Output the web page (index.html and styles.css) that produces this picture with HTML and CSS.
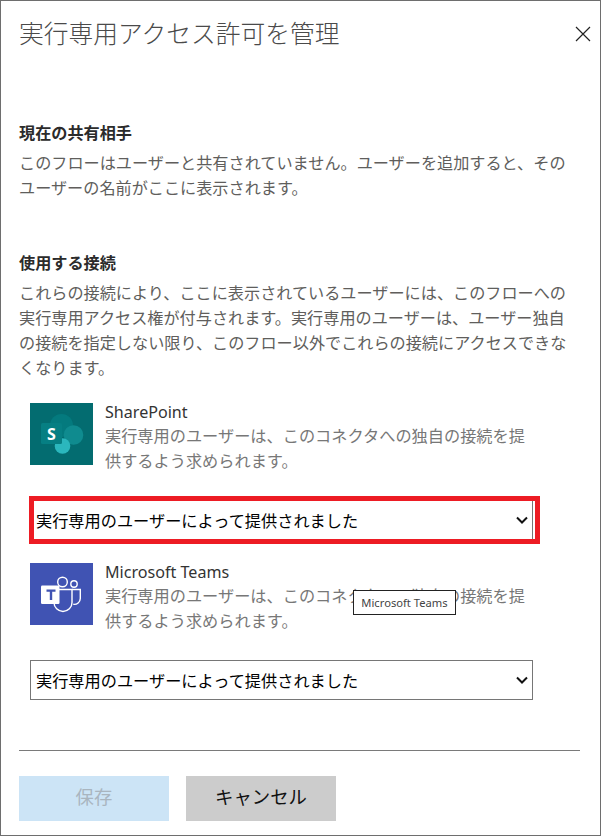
FILE: index.html
```html
<!DOCTYPE html>
<html lang="ja">
<head>
<meta charset="utf-8">
<title>実行専用アクセス許可を管理</title>
<link rel="stylesheet" href="styles.css">
</head>
<body>
<div class="dialog">
  <header class="header">
    <h1 class="title">実行専用アクセス許可を管理</h1>
    <svg class="close" width="16" height="16" viewBox="0 0 16 16"><path d="M1 1l14 14M15 1L1 15" stroke="#222" stroke-width="1.2" fill="none"/></svg>
  </header>
  <section class="section shared">
    <h2 class="heading">現在の共有相手</h2>
    <p class="text">このフローはユーザーと共有されていません。ユーザーを追加すると、そのユーザーの名前がここに表示されます。</p>
  </section>
  <section class="section used">
    <h2 class="heading">使用する接続</h2>
    <p class="text">これらの接続により、ここに表示されているユーザーには、このフローへの実行専用アクセス権が付与されます。実行専用のユーザーは、ユーザー独自の接続を指定しない限り、このフロー以外でこれらの接続にアクセスできなくなります。</p>
  </section>
  <div class="connections">
    <div class="connector">
      <svg class="icon" viewBox="0 0 63 62">
        <rect width="63" height="62" fill="#036c70"/>
        <circle cx="31.500" cy="22.500" r="11.500" fill="#047a7e"/>
        <circle cx="43.500" cy="32" r="9.800" fill="#0f8b8f"/>
        <circle cx="32.500" cy="43" r="7.800" fill="#2bb7bd"/>
        <rect x="11" y="20" width="21" height="21" rx="1.500" fill="#067f83"/>
        <text x="21.500" y="36.500" class="sp-letter">S</text>
      </svg>
      <div class="connector-body">
        <div class="connector-name">SharePoint</div>
        <p class="connector-text">実行専用のユーザーは、このコネクタへの独自の接続を提供するよう求められます。</p>
      </div>
    </div>
    <div class="select-wrap">
      <select class="select"><option>実行専用のユーザーによって提供されました</option></select>
      <svg class="chevron" width="12" height="8" viewBox="0 0 12 8"><path d="M1 1.500l5 5 5-5" fill="none" stroke="#111" stroke-width="2"/></svg>
      <div class="highlight"></div>
    </div>
    <div class="connector">
      <svg class="icon" viewBox="0 0 63 62">
        <rect width="63" height="62" fill="#4053b3"/>
        <circle cx="32.500" cy="19" r="4.800" fill="none" stroke="#fff" stroke-width="1.400"/>
        <circle cx="44" cy="21" r="3.200" fill="none" stroke="#fff" stroke-width="1.400"/>
        <path d="M42 26.500h8.300v9a6 6 0 0 1-7 5.800" fill="none" stroke="#fff" stroke-width="1.400"/>
        <path d="M29 26.500h13v13a9 9 0 0 1-18 0" fill="none" stroke="#fff" stroke-width="1.400"/>
        <rect x="11" y="22.500" width="18.500" height="18.500" rx="1.200" fill="#fff"/>
        <path d="M16.500 26.500h9v2.200h-3.300V37h-2.400v-8.300h-3.300z" fill="#4053b3"/>
      </svg>
      <div class="connector-body">
        <div class="connector-name">Microsoft Teams</div>
        <p class="connector-text">実行専用のユーザーは、このコネクタへの独自の接続を提供するよう求められます。</p>
      </div>
      <div class="tooltip">Microsoft Teams</div>
    </div>
    <div class="select-wrap">
      <select class="select"><option>実行専用のユーザーによって提供されました</option></select>
      <svg class="chevron" width="12" height="8" viewBox="0 0 12 8"><path d="M1 1.500l5 5 5-5" fill="none" stroke="#111" stroke-width="2"/></svg>
    </div>
  </div>
  <hr class="divider">
  <footer class="footer">
    <button class="btn btn-save" disabled>保存</button>
    <button class="btn btn-cancel">キャンセル</button>
  </footer>
</div>
</body>
</html>
```
FILE: styles.css
```css
* { box-sizing: border-box; }
html, body { margin: 0; padding: 0; background: #fff; }
body { font-family: "Noto Sans", "Noto Sans CJK JP", sans-serif; }
.dialog {
  width: 601px;
  height: 836px;
  border: 1px solid #6e6e6e;
  padding: 0 21px 0 18px;
  background: #fff;
  display: flex;
  flex-direction: column;
  overflow: hidden;
}
.header {
  display: flex;
  justify-content: space-between;
  align-items: center;
  height: 68px;
  padding-bottom: 2px;
}
.title {
  margin: 0;
  font-size: 24.750px;
  font-weight: 300;
  color: #4a4a4a;
  line-height: 32px;
}
.close { margin-right: -12px; flex: none; }
.shared { margin-top: 52px; }
.used { margin-top: 50px; }
.heading {
  margin: 0 0 6px;
  font-size: 16.150px;
  line-height: 24px;
  font-weight: 700;
  color: #2b2b2b;
}
.text {
  margin: 0;
  font-size: 16.150px;
  line-height: 25px;
  color: #605e5c;
  width: 555px;
}
.connections { margin-top: 22px; padding-left: 11px; }
.connector {
  position: relative;
  display: flex;
  gap: 12px;
  height: 76px;
}
.icon { width: 63px; height: 62px; flex: none; display: block; }
.sp-letter { font-family: "Open Sans", sans-serif; font-size: 16px; font-weight: 700; fill: #fff; text-anchor: middle; }
.connector-body { width: 430px; margin-top: -3px; }
.connector-name { font-size: 16.100px; line-height: 24px; color: #333; }
.connector-text { margin: 0; font-size: 16.220px; line-height: 25px; color: #777; }
.select-wrap { position: relative; width: 503px; height: 40px; margin: 21px 0 23px; }
.select-wrap:last-child { margin: 21px 0 0; }
.select {
  display: block;
  width: 503px;
  height: 40px;
  padding: 0 24px 0 5px;
  appearance: none;
  border: 1px solid #767676;
  border-radius: 0;
  background: #fff;
  color: #000;
  font-family: "Noto Sans CJK JP", sans-serif;
  font-size: 16.200px;
}
.chevron { position: absolute; right: 5px; top: 16px; pointer-events: none; }
.highlight {
  position: absolute;
  left: -1px;
  right: -7px;
  top: -4px;
  bottom: -4px;
  border: 5px solid #ed1c24;
  pointer-events: none;
}
.tooltip {
  position: absolute;
  left: 323px;
  top: 27px;
  width: 103px;
  height: 25px;
  border: 1px solid #222;
  background: #fff;
  color: #444;
  font-size: 11.200px;
  line-height: 23px;
  text-align: center;
  white-space: nowrap;
}
.divider {
  margin: 50px 0 0;
  border: 0;
  border-top: 1px solid #7a7a7a;
  height: 0;
  width: 561px;
}
.footer { display: flex; gap: 17px; margin-top: 25px; }
.btn {
  width: 150px;
  height: 45px;
  border: 0;
  padding: 0 0 5px;
  font-family: "Noto Sans CJK JP", sans-serif;
  font-size: 18.400px;
}
.btn-save { background: #cce4f6; color: #a9b5bf; }
.btn-cancel { background: #cccccc; color: #111; }
```
